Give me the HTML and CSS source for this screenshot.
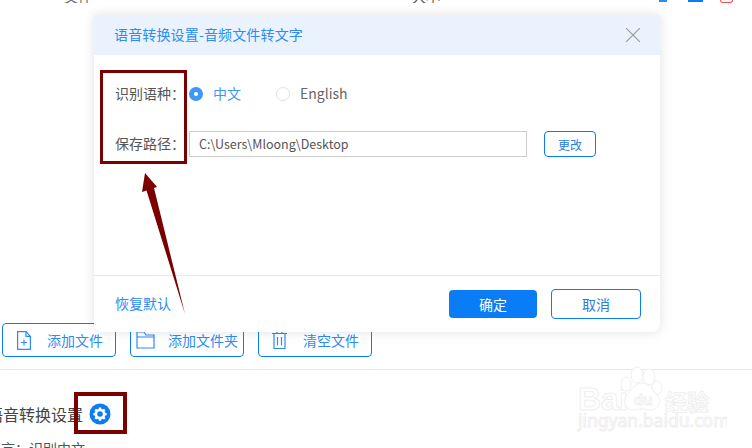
FILE: index.html
```html
<!DOCTYPE html>
<html lang="zh">
<head>
<meta charset="utf-8">
<title>语音转换设置</title>
<link rel="stylesheet" href="styles.css">
</head>
<body>
<div class="page">
  <div class="topbar">
    <span class="top-text first">文件</span>
    <span class="top-text second">大小</span>
    <span class="top-icons">
      <i class="ti ti-a"></i><i class="ti ti-b"></i><i class="ti ti-c"></i>
    </span>
  </div>
  <div class="toolbar">
    <button class="tool tool-1">
      <svg class="ticon" width="14" height="19" viewBox="0 0 14 19"><path d="M.6.6h8.400l4.400 4.800v13H.6z" fill="none" stroke="#2b8cf5" stroke-width="1.200"/><path d="M9 .6v4.800h4.400M7 8.500v6M4 11.500h6" fill="none" stroke="#2b8cf5" stroke-width="1.200"/></svg>
      <span>添加文件</span>
    </button>
    <button class="tool tool-2">
      <svg class="ticon" width="19" height="18" viewBox="0 0 19 18"><path d="M1 1h7l2 3h8v13H1z" fill="none" stroke="#2b8cf5" stroke-width="1.200"/><path d="M1 6h17" stroke="#2b8cf5" stroke-width="1"/></svg>
      <span>添加文件夹</span>
    </button>
    <button class="tool tool-3">
      <svg class="ticon" width="15" height="20" viewBox="0 0 15 20"><path d="M0 3.500h15M5 3V1h5v2M2 4v14.500h11V4M5.500 7v8.500M9.500 7v8.500" fill="none" stroke="#2b8cf5" stroke-width="1.200"/></svg>
      <span>清空文件</span>
    </button>
  </div>
  <div class="divider"></div>
  <div class="setting">
    <span class="setting-title">语音转换设置</span>
    <svg class="gear" width="22" height="22" viewBox="0 0 22 22">
      <circle cx="11" cy="11" r="10.500" fill="#0a7cf5"/>
      <path d="M9.600 3.500h2.800l.5 2 1.700.7 1.800-1.100 2 2-1.100 1.800.7 1.700 2 .5v2.800l-2 .5-.7 1.700 1.100 1.800-2 2-1.800-1.100-1.700.7-.5 2H9.600l-.5-2-1.700-.7-1.800 1.100-2-2 1.100-1.800-.7-1.700-2-.5v-2.800l2-.5.7-1.700-1.100-1.800 2-2 1.800 1.100 1.700-.7z" fill="#fff" transform="translate(11 11) scale(.74) translate(-11 -12.300)"/>
      <circle cx="11" cy="11" r="2.800" fill="#0a7cf5"/>
    </svg>
  </div>
  <div class="lang-line">语言：识别中文</div>

  <div class="modal">
    <div class="modal-head">
      <span class="modal-title">语音转换设置-音频文件转文字</span>
      <svg class="close" width="14" height="14" viewBox="0 0 14 14"><path d="M0 0l14 14M14 0L0 14" stroke="#999" stroke-width="1.100"/></svg>
    </div>
    <div class="modal-body">
      <div class="row">
        <span class="label">识别语种：</span>
        <span class="radio on"></span><span class="radio-text on-text">中文</span>
        <span class="radio off"></span><span class="radio-text">English</span>
      </div>
      <div class="row">
        <span class="label">保存路径：</span>
        <div class="path">C:\Users\Mloong\Desktop</div>
        <button class="change">更改</button>
      </div>
    </div>
    <div class="modal-foot">
      <a class="reset">恢复默认</a>
      <button class="ok">确定</button>
      <button class="cancel">取消</button>
    </div>
  </div>

  <div class="mark mark-labels"></div>
  <div class="mark mark-gear"></div>
  <svg class="arrow" width="60" height="150" viewBox="0 0 60 150">
    <path d="M5 0L2 19L6.500 17.500L45 141L14 15L17 14z" fill="#7b0000"/>
  </svg>

  <svg class="watermark" width="150" height="72" viewBox="0 0 150 72">
    <g fill="#fff" stroke="#efefef" stroke-width="1">
      <text x="1" y="45" class="wm-big">Bai</text>
      <ellipse cx="60" cy="10" rx="6" ry="8"/>
      <ellipse cx="72" cy="12" rx="6" ry="8"/>
      <ellipse cx="80" cy="23" rx="5" ry="7"/>
      <ellipse cx="49" cy="19" rx="5" ry="7"/>
      <path d="M65 18c8 0 10 7 15 12 5 6 2 15-6 15-4 0-6-1-9-1s-5 1-9 1c-8 0-11-9-6-15 5-5 7-12 15-12z"/>
      <text x="57" y="40" class="wm-du">du</text>
      <text x="88" y="45" class="wm-cn">经验</text>
      <text x="1" y="62" class="wm-url">jingyan.baidu.com</text>
    </g>
  </svg>
</div>
</body>
</html>
```
FILE: styles.css
```css
* { box-sizing: border-box; }
html, body { margin: 0; padding: 0; background: #fff; }
body { font-family: "Noto Sans CJK SC", "Noto Sans", sans-serif; }
.page { position: relative; width: 752px; height: 448px; overflow: hidden; background: #fff; }

.topbar { display: flex; height: 3px; overflow: hidden; }
.top-text { font-size: 14px; line-height: 14px; color: #666; margin-top: -11px; height: 14px; }
.top-text.first { margin-left: 64px; }
.top-text.second { margin-left: 320px; }
.top-icons { display: flex; margin-left: 219px; }
.ti { display: block; height: 2px; }
.ti-a { width: 8px; background: #2b8cf5; }
.ti-b { width: 15px; margin-left: 21px; background: #0a7cf5; }
.ti-c { width: 13px; margin-left: 17px; border: 1px solid #f05050; border-top: 0; border-radius: 0 0 7px 7px; height: 3px; }

.toolbar { display: flex; gap: 14px; margin: 320px 0 0 2px; }
.tool { display: flex; align-items: center; width: 114px; height: 34px; padding: 0; background: #fff; border: 1px solid #0a7cf5; border-radius: 4px; font: inherit; font-size: 14px; color: #2b8cf5; }
.ticon { flex: none; }
.tool-1 { padding-left: 14px; }
.tool-1 span { margin-left: 16px; }
.tool-2 { padding-left: 5px; }
.tool-2 span { margin-left: 13px; }
.tool-3 { padding-left: 13px; }
.tool-3 span { margin-left: 16px; }

.divider { height: 1px; background: #e3e9f5; margin-top: 12px; }
.setting { display: flex; align-items: center; height: 30px; margin: 29px 0 0 -13px; }
.setting-title { font-size: 16px; color: #444; line-height: 30px; }
.gear { margin-left: 6px; }
.lang-line { margin: 9px 0 0 -13px; font-size: 14px; line-height: 20px; color: #555; }

.modal { position: absolute; left: 94px; top: 15px; width: 566px; height: 317px; display: flex; flex-direction: column; background: #fff; border-radius: 0 0 8px 8px; box-shadow: 0 0 12px rgba(0, 0, 0, .12); }
.modal-head { display: flex; align-items: center; justify-content: space-between; height: 40px; flex: none; padding: 0 20px; background: #eaf2fd; }
.modal-title { font-size: 14px; letter-spacing: .15px; color: #2b8cf5; padding-bottom: 2px; }
.modal-body { flex: 1; padding: 26px 0 0 21px; display: flex; flex-direction: column; gap: 24px; }
.row { display: flex; align-items: center; height: 26px; }
.label { width: 74px; flex: none; font-size: 14px; color: #555; padding-bottom: 2px; }
.radio { width: 14px; height: 14px; border-radius: 50%; flex: none; }
.radio.on { background: #3f97f6; position: relative; }
.radio.on::after { content: ""; position: absolute; left: 5px; top: 5px; width: 4px; height: 4px; border-radius: 50%; background: #fff; }
.radio.off { border: 1px solid #dfe3ea; margin-left: 35px; }
.radio-text { margin-left: 10px; font-size: 14px; color: #666; padding-bottom: 2px; }
.on-text { color: #3f97f6; }
.path { width: 338px; height: 26px; border: 1px solid #ccc; padding-left: 9px; font-size: 12.500px; line-height: 23px; color: #555; }
.change { width: 52px; height: 26px; margin-left: 17px; padding: 0; background: #fff; border: 1px solid #0a7cf5; border-radius: 4px; font: inherit; font-size: 12px; color: #2b7ddd; }
.modal-foot { display: flex; align-items: center; height: 57px; flex: none; padding: 0 19px 0 21px; border-top: 1px solid #e3e9f5; }
.reset { font-size: 14px; color: #2b8cf5; margin-right: auto; padding-bottom: 2px; }
.ok { width: 88px; height: 28px; padding: 0; background: #0a7cf5; border: 0; border-radius: 4px; font: inherit; font-size: 14px; color: #fff; }
.cancel { width: 90px; height: 30px; margin-left: 14px; padding: 0; background: #fff; border: 1px solid #0a7cf5; border-radius: 4px; font: inherit; font-size: 14px; color: #2b7ddd; }

.mark { position: absolute; border-style: solid; border-color: #7b0000; }
.mark-labels { left: 100px; top: 70px; width: 87px; height: 94px; border-width: 3px; }
.mark-gear { left: 74px; top: 392px; width: 53px; height: 42px; border-width: 4px; }
.arrow { position: absolute; left: 140px; top: 173px; }

.watermark { position: absolute; left: 577px; top: 365px; }
.wm-big { font: 700 32px "Liberation Sans", sans-serif; }
.wm-du { font: 700 15px "Liberation Sans", sans-serif; }
.wm-cn { font: 700 22px "Noto Sans CJK SC", sans-serif; }
.wm-url { font: 400 17.500px "Noto Sans", sans-serif; }
```
